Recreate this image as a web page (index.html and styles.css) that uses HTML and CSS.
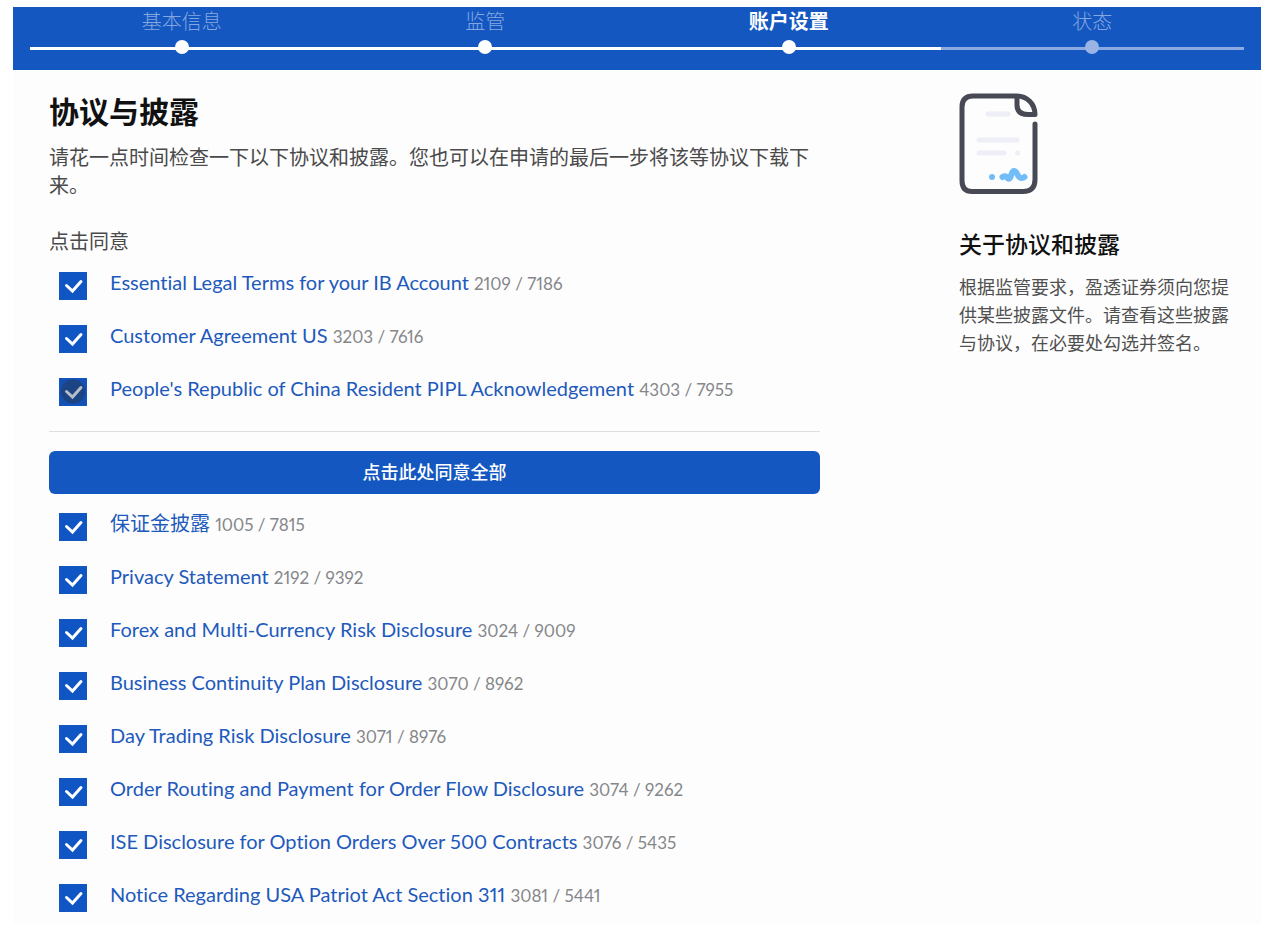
FILE: index.html
```html
<!DOCTYPE html>
<html lang="zh-CN">
  <head>
    <meta charset="utf-8" />
    <meta name="viewport" content="width=device-width, initial-scale=1" />

    <title>协议与披露</title>

    <link rel="stylesheet" href="styles.css">
  </head>

  <body>
    <div class="page">
      <header class="progress">
        <ol class="steps">
          <li class="step done"><span>基本信息</span></li>
          <li class="step done"><span>监管</span></li>
          <li class="step done current" aria-current="step"><span>账户设置</span></li>
          <li class="step"><span>状态</span></li>
        </ol>
      </header>

      <div class="content">
        <main>
          <h1>协议与披露</h1>
          <p class="intro">请花一点时间检查一下以下协议和披露。您也可以在申请的最后一步将该等协议下载下来。</p>

          <p class="hint">点击同意</p>
          <ul class="agreements">
            <li>
              <input type="checkbox" id="f2109" checked>
              <label for="f2109"><a href="#2109">Essential Legal Terms for your IB Account</a> <small>2109 / 7186</small></label>
            </li>
            <li>
              <input type="checkbox" id="f3203" checked>
              <label for="f3203"><a href="#3203">Customer Agreement US</a> <small>3203 / 7616</small></label>
            </li>
            <li>
              <input type="checkbox" id="f4303" class="pressed" checked>
              <label for="f4303"><a href="#4303">People's Republic of China Resident PIPL Acknowledgement</a> <small>4303 / 7955</small></label>
            </li>
          </ul>

          <hr>
          <button type="button" class="agree-all">点击此处同意全部</button>

          <ul class="agreements">
            <li>
              <input type="checkbox" id="f1005" checked>
              <label for="f1005"><a href="#1005">保证金披露</a> <small>1005 / 7815</small></label>
            </li>
            <li>
              <input type="checkbox" id="f2192" checked>
              <label for="f2192"><a href="#2192">Privacy Statement</a> <small>2192 / 9392</small></label>
            </li>
            <li>
              <input type="checkbox" id="f3024" checked>
              <label for="f3024"><a href="#3024">Forex and Multi-Currency Risk Disclosure</a> <small>3024 / 9009</small></label>
            </li>
            <li>
              <input type="checkbox" id="f3070" checked>
              <label for="f3070"><a href="#3070">Business Continuity Plan Disclosure</a> <small>3070 / 8962</small></label>
            </li>
            <li>
              <input type="checkbox" id="f3071" checked>
              <label for="f3071"><a href="#3071">Day Trading Risk Disclosure</a> <small>3071 / 8976</small></label>
            </li>
            <li>
              <input type="checkbox" id="f3074" checked>
              <label for="f3074"><a href="#3074">Order Routing and Payment for Order Flow Disclosure</a> <small>3074 / 9262</small></label>
            </li>
            <li>
              <input type="checkbox" id="f3076" checked>
              <label for="f3076"><a href="#3076">ISE Disclosure for Option Orders Over 500 Contracts</a> <small>3076 / 5435</small></label>
            </li>
            <li>
              <input type="checkbox" id="f3081" checked>
              <label for="f3081"><a href="#3081">Notice Regarding USA Patriot Act Section 311</a> <small>3081 / 5441</small></label>
            </li>
          </ul>
        </main>

        <aside>
          <svg class="doc-icon" width="80" height="102" viewBox="0 0 80 102" fill="none" stroke-linecap="round" stroke-linejoin="round" aria-hidden="true">
            <g stroke="#474a54" stroke-width="5">
              <path d="M76 31V86.500Q76 98.500 64 98.500H13Q3 98.500 3 87.500V14Q3 3 14 3H58C68 3 76 11 76 21.500H69Q58 21.500 58 12V3" />
            </g>
            <g stroke="#eeeff6" stroke-width="5">
              <path d="M29 21h20M20 47h38M20 60h25M58.500 60h.1" />
            </g>
            <circle cx="33" cy="84" r="3" fill="#72bdf8" />
            <path d="M43.500 84q3-2 5 1c4 3 3-6 6-7c4-1 4 8 8 7q2 0 3-1" stroke="#72bdf8" stroke-width="6" />
          </svg>
          <h2>关于协议和披露</h2>
          <p>根据监管要求，盈透证券须向您提供某些披露文件。请查看这些披露与协议，在必要处勾选并签名。</p>
        </aside>
      </div>
    </div>
  </body>
</html>
```

FILE: styles.css
```css
* {
  box-sizing: border-box;
}
body {
  margin: 0;
  background-color: #ffffff;
  color: #4a4a4a;
  font-family: Lato, 'Noto Sans CJK SC', sans-serif;
  font-size: 20px;
  font-variant-ligatures: none;
  font-variant-numeric: proportional-nums;
  line-height: 28px;
}
h1,
h2,
p,
ul,
ol {
  margin: 0;
  padding: 0;
}
ul,
ol {
  list-style: none;
}
.page {
  margin: 7px 22px 12px 13px;
  background-color: #fdfdfd;
}

/* step bar */
.progress {
  height: 63px;
  padding: 0 17px;
  background-color: #1457c0;
}
.steps {
  display: flex;
}
.step {
  position: relative;
  flex: 1;
  height: 43px;
  border-bottom: 3px solid #8dabe2;
  color: #85a7e0;
  font-weight: 300;
  text-align: center;
}
.step::after {
  content: '';
  position: absolute;
  left: 50%;
  bottom: -7px;
  width: 14px;
  height: 14px;
  margin-left: -7px;
  border-radius: 50%;
  background-color: #9ab4e6;
}
.step.done {
  border-color: #ffffff;
}
.step.done::after {
  background-color: #ffffff;
}
.step.current {
  color: #ffffff;
  font-weight: 700;
}

.content {
  display: grid;
  grid-template-columns: minmax(0, 1fr) 272px;
  column-gap: 139px;
  padding: 22px 30px 0 36px;
}
h1 {
  margin-bottom: 13px;
  color: #111111;
  font-size: 30px;
  font-weight: 700;
  line-height: 38px;
}
.intro {
  margin-bottom: 28px;
}
.hint {
  margin-bottom: 4px;
}

.agreements li {
  display: flex;
  align-items: center;
  height: 53px;
  padding-left: 10px;
}
.agreements input {
  appearance: none;
  flex: none;
  width: 28px;
  height: 28px;
  margin: 0 23px 0 0;
  border: 1px solid #1457c0;
  background-color: #ffffff;
}
.agreements input:checked {
  background: #0f56c4 url("data:image/svg+xml,%3Csvg xmlns='http://www.w3.org/2000/svg' viewBox='0 0 26 26'%3E%3Cpath d='M6.500 12.500l6 5.500 8.500-9.500' fill='none' stroke='%23fff' stroke-width='3' stroke-linecap='round'/%3E%3C/svg%3E");
}
.agreements input.pressed:checked {
  background: #1450b4 url("data:image/svg+xml,%3Csvg xmlns='http://www.w3.org/2000/svg' viewBox='0 0 26 26'%3E%3Ccircle cx='13' cy='12.500' r='12' fill='%231c4382'/%3E%3Cpath d='M6.500 12.500l6 5.500 8.500-9.500' fill='none' stroke='%23b4bdca' stroke-width='3' stroke-linecap='round'/%3E%3C/svg%3E");
}
.agreements label {
  padding-bottom: 5px;
}
.agreements a {
  color: #1d5abc;
  text-decoration: none;
}
.agreements small {
  color: #85878a;
  font-size: 17px;
}
hr {
  height: 1px;
  margin: 13px 0 19px;
  border: 0;
  background-color: #dddfe2;
}
.agree-all {
  display: block;
  width: 100%;
  height: 43px;
  margin-bottom: 6px;
  padding: 0 0 3px;
  border: 0;
  border-radius: 6px;
  background-color: #1457c0;
  color: #ffffff;
  font-family: inherit;
  font-size: 18px;
  font-weight: 500;
}

aside {
  padding-top: 1px;
  color: #505050;
  font-size: 18px;
}
.doc-icon {
  display: block;
  margin-bottom: 35px;
}
h2 {
  margin-bottom: 15px;
  color: #111111;
  font-size: 23px;
  font-weight: 500;
  line-height: 28px;
}
```
